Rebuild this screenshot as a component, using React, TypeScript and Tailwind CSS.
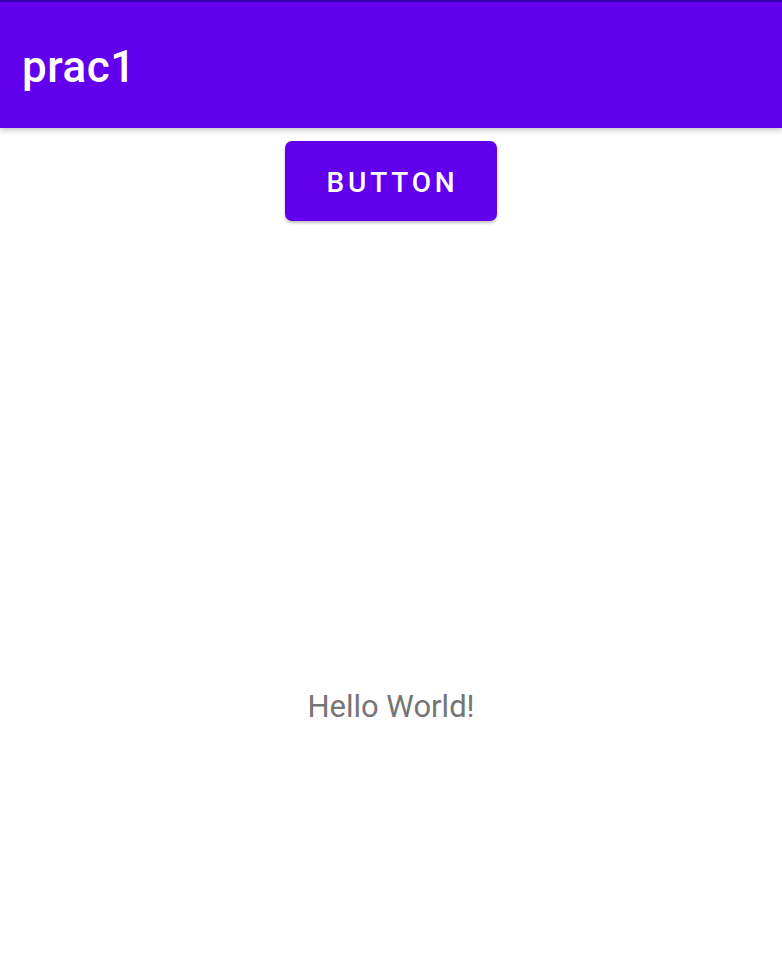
export default function App() {
  return (
    <div className="w-[782px] h-[972px] bg-white flex flex-col overflow-hidden" style={{ fontFamily: "Roboto, 'Noto Sans', sans-serif" }}>
      <div className="h-[2px] bg-[#3700B3]" />
      <div className="h-[126px] bg-[#6200EE] flex items-center pl-[22px] pt-[4px] shadow-[0_2px_6px_rgba(0,0,0,0.25)] relative z-10">
        <span className="text-white text-[44px] font-medium leading-none tracking-[0.5px]">prac1</span>
      </div>
      <div className="flex flex-col items-center pt-[13px]">
        <button className="w-[212px] h-[80px] pt-[3px] rounded-[7px] bg-[#6200EE] text-white text-[28px] font-medium tracking-[3.8px] pl-[3px] shadow-[0_2px_3px_rgba(0,0,0,0.25)]">
          BUTTON
        </button>
        <div className="mt-[470px] text-[31px] text-[#757575] leading-none">Hello World!</div>
      </div>
    </div>
  );
}
